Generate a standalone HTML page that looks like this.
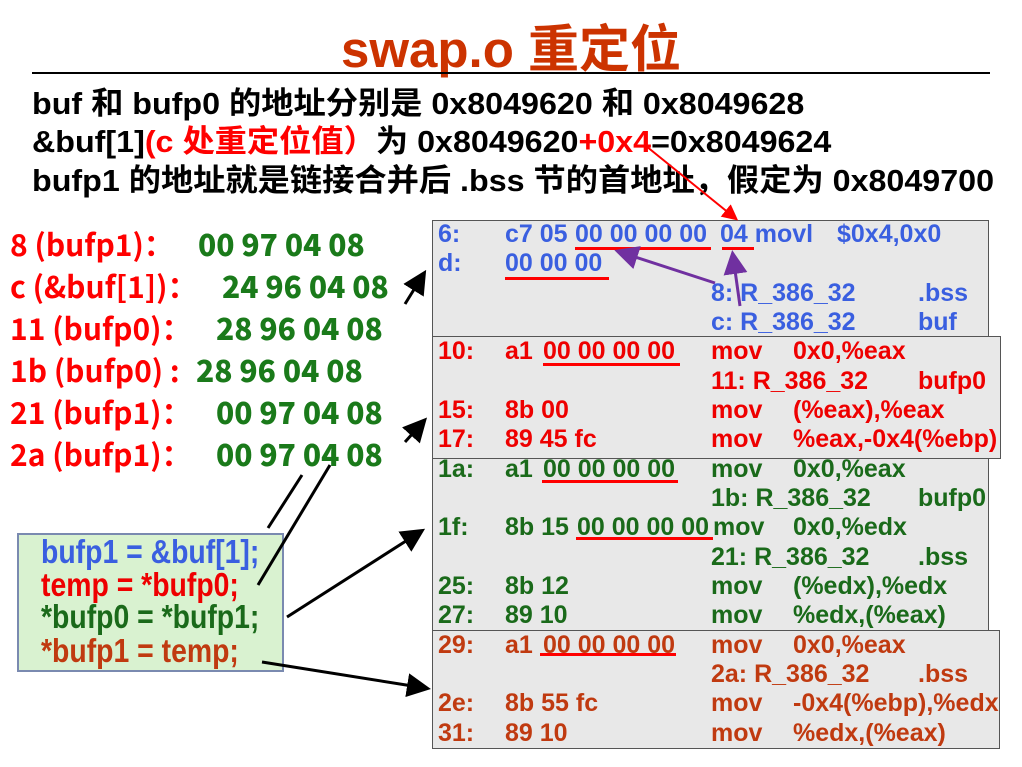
<!DOCTYPE html>
<html><head><meta charset="utf-8">
<style>
body{margin:0;width:1022px;height:767px;background:#fff;position:relative;overflow:hidden;font-family:"Liberation Sans","Noto Sans CJK SC",sans-serif;font-weight:bold}
.a{position:absolute;white-space:nowrap}
.t{font-size:51px;color:#cc3300;left:0;width:1022px;text-align:center;top:8px}
.h{font-size:31px;color:#000;left:32px;transform:scaleX(1.04);transform-origin:left}
.l{font-family:"Noto Sans CJK SC",sans-serif;font-size:30px;left:10px;color:#f00;line-height:30px}
.l b{position:absolute;color:#1a7a1a;font-size:30px}
.box{position:absolute;background:#e8e8e8;border:1.5px solid #555;box-sizing:border-box}
.r{position:absolute;font-size:25px;height:28px;line-height:28px;white-space:nowrap}
.r span{position:absolute}
.ul{position:absolute;height:3px;background:#f00}
.blue{color:#3a5fe0}.red{color:#e00}.grn{color:#1a6a1a}.brn{color:#c03a10}
.g{position:absolute;left:17px;top:533px;width:267px;height:139px;background:#d9f2d0;border:2px solid #7a8ab0;box-sizing:border-box}
.g div{position:absolute;left:22px;font-size:33px;line-height:34px;white-space:nowrap;transform:scaleX(.86);transform-origin:left}
</style></head><body>
<div class="a t">swap.o 重定位</div>
<div class="a" style="left:32px;top:72px;width:958px;height:2px;background:#000"></div>
<div class="a h" style="top:78px">buf 和 bufp0 的地址分别是 0x8049620 和 0x8049628</div>
<div class="a h" style="top:116px">&amp;buf[1]<span style="color:#f00">(c 处重定位值）</span>为 0x8049620<span style="color:#f00">+0x4</span>=0x8049624</div>
<div class="a h" style="top:155px">bufp1 的地址就是链接合并后 .bss 节的首地址，假定为 0x8049700</div>

<div class="a l" style="top:228px">8 (bufp1)：<b style="left:188px">00 97 04 08</b></div>
<div class="a l" style="top:270px">c (&amp;buf[1])：<b style="left:212px">24 96 04 08</b></div>
<div class="a l" style="top:312px">11 (bufp0)：<b style="left:206px">28 96 04 08</b></div>
<div class="a l" style="top:354px">1b (bufp0) :<b style="left:186px">28 96 04 08</b></div>
<div class="a l" style="top:396px">21 (bufp1)：<b style="left:206px">00 97 04 08</b></div>
<div class="a l" style="top:438px">2a (bufp1)：<b style="left:206px">00 97 04 08</b></div>

<div class="box" style="left:432px;top:220px;width:557px;height:117px"></div>
<div class="box" style="left:432px;top:336px;width:569px;height:123px"></div>
<div class="box" style="left:432px;top:458px;width:557px;height:173px"></div>
<div class="box" style="left:432px;top:630px;width:568px;height:119px"></div>

<div class="r blue" style="top:220px"><span style="left:438px">6:</span><span style="left:505px">c7 05</span><span style="left:575px">00 00 00 00</span><span style="left:720px">04 movl</span><span style="left:837px">$0x4,0x0</span></div>
<div class="r blue" style="top:249px"><span style="left:438px">d:</span><span style="left:505px">00 00 00</span></div>
<div class="r blue" style="top:279px"><span style="left:711px">8: R_386_32</span><span style="left:918px">.bss</span></div>
<div class="r blue" style="top:308px"><span style="left:711px">c: R_386_32</span><span style="left:918px">buf</span></div>

<div class="r red" style="top:337px"><span style="left:438px">10:</span><span style="left:505px">a1</span><span style="left:543px">00 00 00 00</span><span style="left:711px">mov</span><span style="left:793px">0x0,%eax</span></div>
<div class="r red" style="top:367px"><span style="left:711px">11: R_386_32</span><span style="left:918px">bufp0</span></div>
<div class="r red" style="top:396px"><span style="left:438px">15:</span><span style="left:505px">8b 00</span><span style="left:711px">mov</span><span style="left:793px">(%eax),%eax</span></div>
<div class="r red" style="top:425px"><span style="left:438px">17:</span><span style="left:505px">89 45 fc</span><span style="left:711px">mov</span><span style="left:793px">%eax,-0x4(%ebp)</span></div>

<div class="r grn" style="top:455px"><span style="left:438px">1a:</span><span style="left:505px">a1</span><span style="left:543px">00 00 00 00</span><span style="left:711px">mov</span><span style="left:793px">0x0,%eax</span></div>
<div class="r grn" style="top:484px"><span style="left:711px">1b: R_386_32</span><span style="left:918px">bufp0</span></div>
<div class="r grn" style="top:513px"><span style="left:438px">1f:</span><span style="left:505px">8b 15</span><span style="left:577px">00 00 00 00</span><span style="left:713px">mov</span><span style="left:793px">0x0,%edx</span></div>
<div class="r grn" style="top:543px"><span style="left:711px">21: R_386_32</span><span style="left:918px">.bss</span></div>
<div class="r grn" style="top:572px"><span style="left:438px">25:</span><span style="left:505px">8b 12</span><span style="left:711px">mov</span><span style="left:793px">(%edx),%edx</span></div>
<div class="r grn" style="top:601px"><span style="left:438px">27:</span><span style="left:505px">89 10</span><span style="left:711px">mov</span><span style="left:793px">%edx,(%eax)</span></div>

<div class="r brn" style="top:631px"><span style="left:438px">29:</span><span style="left:505px">a1</span><span style="left:543px">00 00 00 00</span><span style="left:711px">mov</span><span style="left:793px">0x0,%eax</span></div>
<div class="r brn" style="top:660px"><span style="left:711px">2a: R_386_32</span><span style="left:918px">.bss</span></div>
<div class="r brn" style="top:689px"><span style="left:438px">2e:</span><span style="left:505px">8b 55 fc</span><span style="left:711px">mov</span><span style="left:793px">-0x4(%ebp),%edx</span></div>
<div class="r brn" style="top:719px"><span style="left:438px">31:</span><span style="left:505px">89 10</span><span style="left:711px">mov</span><span style="left:793px">%edx,(%eax)</span></div>

<div class="ul" style="left:575px;top:247px;width:136px"></div>
<div class="ul" style="left:722px;top:247px;width:32px"></div>
<div class="ul" style="left:505px;top:277px;width:104px"></div>
<div class="ul" style="left:543px;top:363px;width:137px"></div>
<div class="ul" style="left:542px;top:480px;width:136px"></div>
<div class="ul" style="left:576px;top:537px;width:137px"></div>
<div class="ul" style="left:540px;top:653px;width:136px"></div>

<div class="g">
<div class="blue" style="top:0px">bufp1 = &amp;buf[1];</div>
<div class="red" style="top:33px">temp = *bufp0;</div>
<div class="grn" style="top:65px">*bufp0 = *bufp1;</div>
<div class="brn" style="top:99px">*bufp1 = temp;</div>
</div>

<svg class="a" style="left:0;top:0" width="1022" height="767">
<defs>
<marker id="k" markerWidth="8" markerHeight="8" refX="6" refY="4" orient="auto"><path d="M0,0L8,4L0,8z" fill="#000"/></marker>
<marker id="p" markerWidth="8" markerHeight="8" refX="6" refY="4" orient="auto"><path d="M0,0L8,4L0,8z" fill="#7030a0"/></marker>
<marker id="rr" markerWidth="8" markerHeight="8" refX="6" refY="4" orient="auto"><path d="M0,0L8,4L0,8z" fill="#f00"/></marker>
</defs>
<line x1="646" y1="146" x2="735" y2="218" stroke="#f00" stroke-width="2" marker-end="url(#rr)"/>
<line x1="740" y1="306" x2="733" y2="256" stroke="#7030a0" stroke-width="3" marker-end="url(#p)"/>
<line x1="715" y1="283" x2="620" y2="252" stroke="#7030a0" stroke-width="3" marker-end="url(#p)"/>
<line x1="405" y1="304" x2="423" y2="275" stroke="#000" stroke-width="3" marker-end="url(#k)"/>
<line x1="405" y1="442" x2="423" y2="422" stroke="#000" stroke-width="3" marker-end="url(#k)"/>
<line x1="268" y1="528" x2="302" y2="475" stroke="#000" stroke-width="3"/>
<line x1="258" y1="585" x2="330" y2="465" stroke="#000" stroke-width="3"/>
<line x1="287" y1="617" x2="420" y2="532" stroke="#000" stroke-width="3" marker-end="url(#k)"/>
<line x1="262" y1="662" x2="425" y2="688" stroke="#000" stroke-width="3" marker-end="url(#k)"/>
</svg>
</body></html>
